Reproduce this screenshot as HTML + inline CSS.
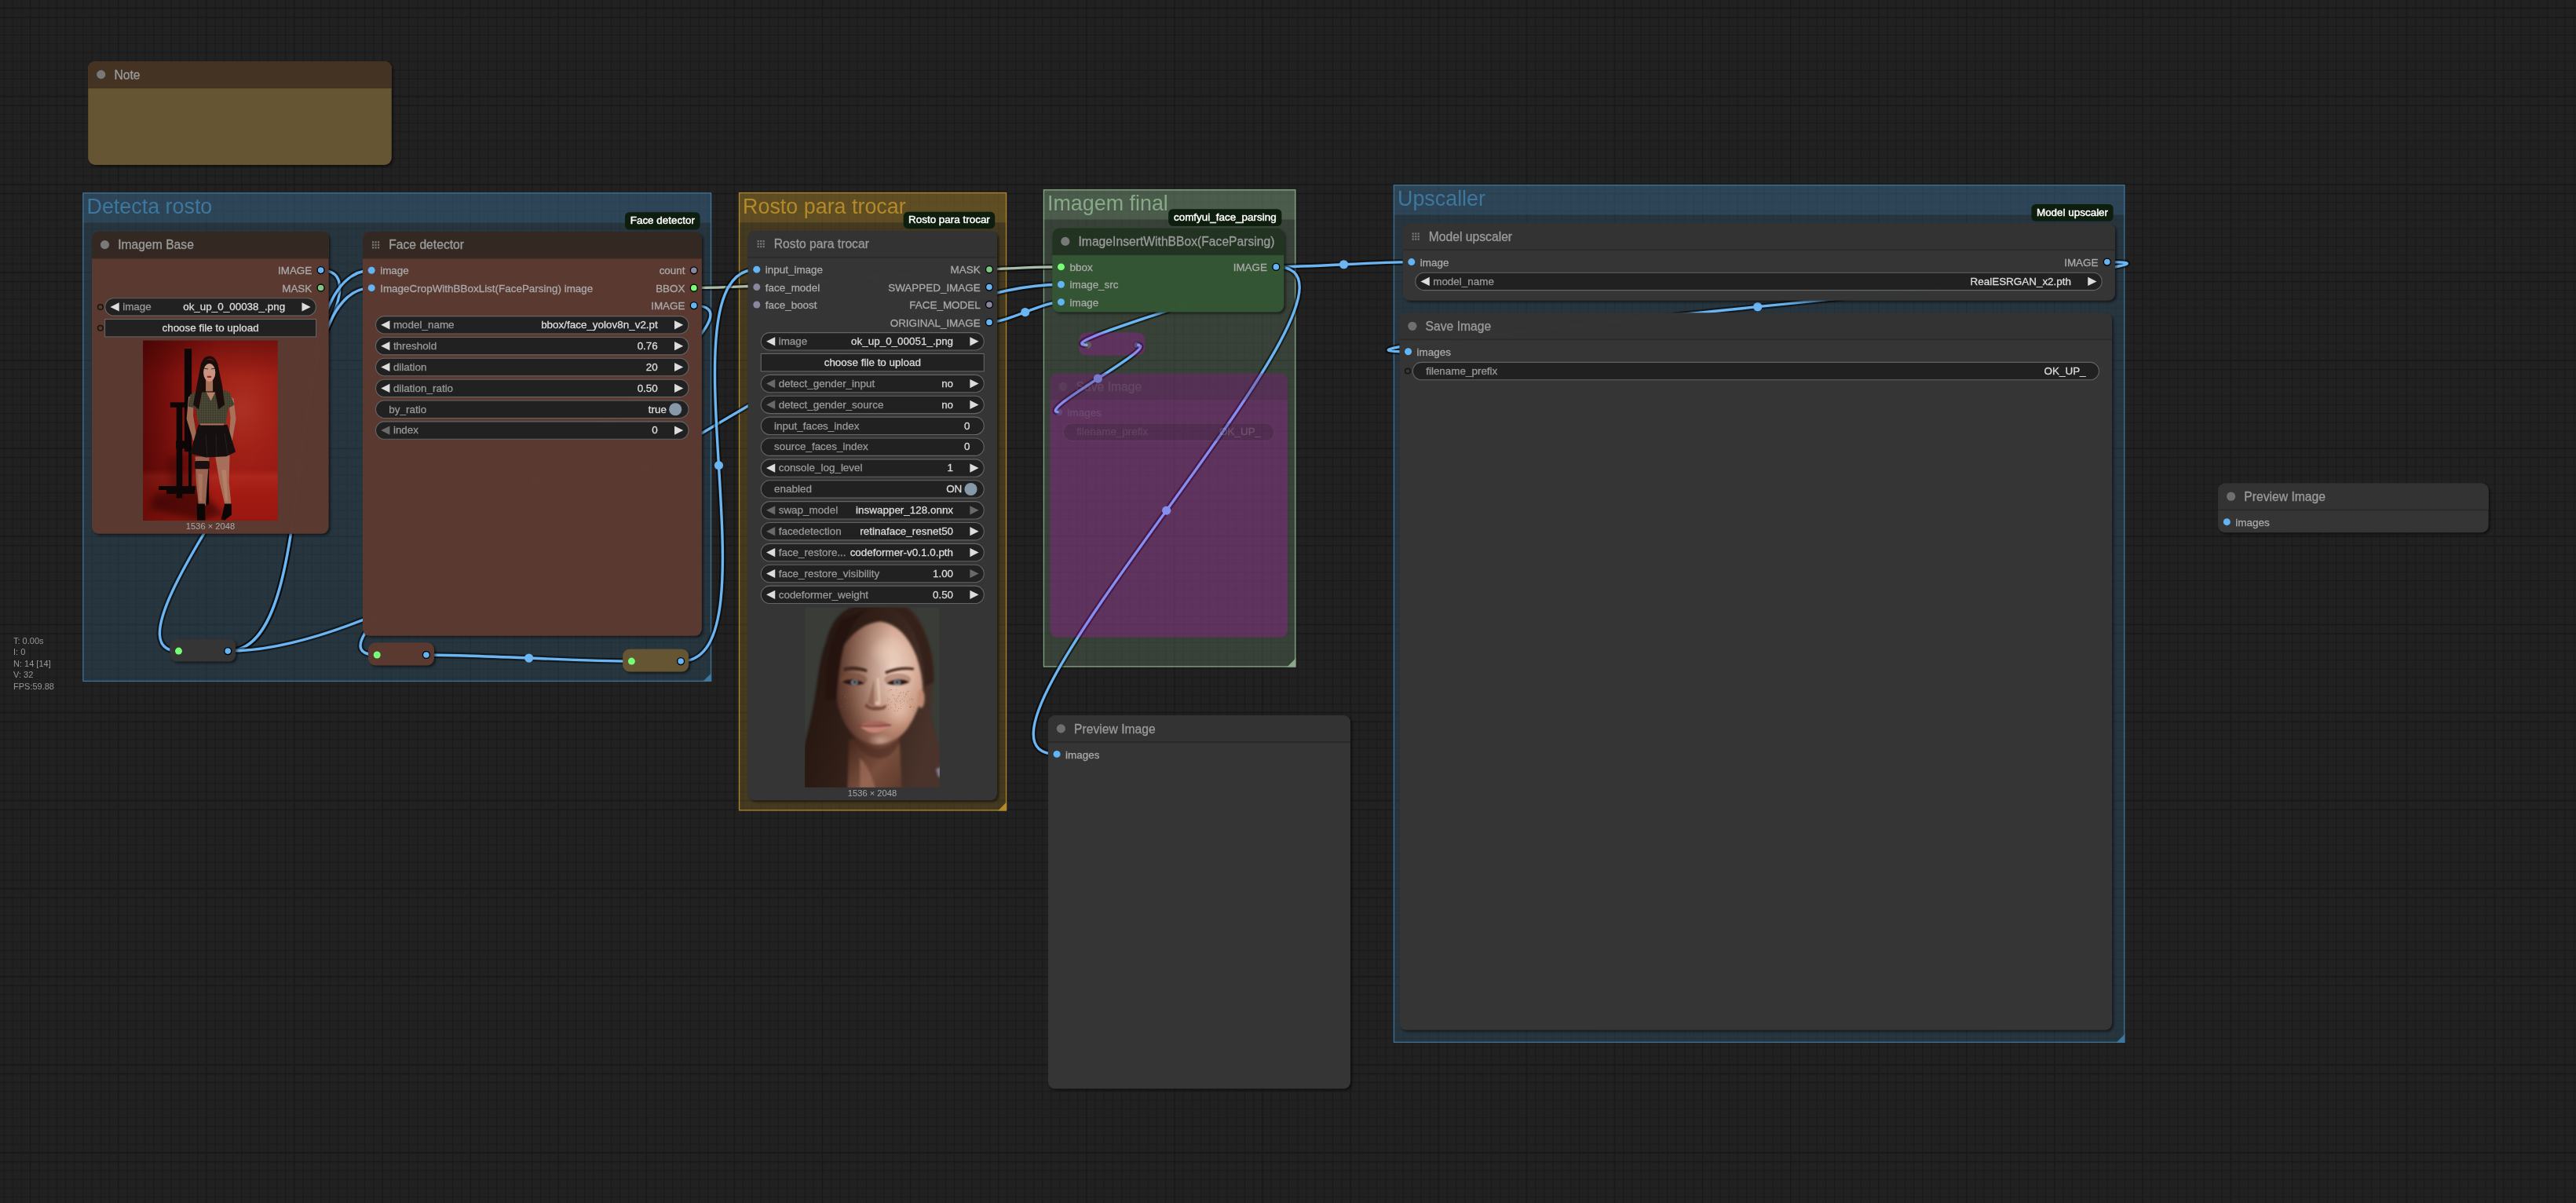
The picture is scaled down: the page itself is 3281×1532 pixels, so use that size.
<!DOCTYPE html>
<html><head><meta charset="utf-8"><title>ComfyUI</title>
<style>
html,body{margin:0;padding:0;background:#212121;}
body{width:3281px;height:1532px;overflow:hidden;}
svg{display:block;font-family:"Liberation Sans", Arial, sans-serif;}
text{white-space:pre;}
</style></head><body>
<svg width="3281" height="1532" viewBox="0 0 3281 1532">
<defs>
<pattern id="gmin" x="38" y="21.6" width="11.21" height="11.21" patternUnits="userSpaceOnUse"><path d="M0.6 0V11.21M0 0.6H11.21" stroke="#1a1a1a" stroke-width="1.25" fill="none"/></pattern>
<pattern id="gmaj" x="38" y="21.6" width="112.1" height="112.1" patternUnits="userSpaceOnUse"><path d="M0.6 0V112.1M0 0.6H112.1M0 100.95H112.1" stroke="#181818" stroke-width="1.3" fill="none"/></pattern>
<filter id="noop" color-interpolation-filters="sRGB" x="-5%" y="-15%" width="110%" height="130%" filterUnits="objectBoundingBox"><feOffset dx="0" dy="0"/></filter>
<filter id="sh" color-interpolation-filters="sRGB" x="-5%" y="-5%" width="110%" height="115%"><feDropShadow dx="2.2" dy="2.2" stdDeviation="1.7" flood-color="#000" flood-opacity="0.5"/></filter>
<filter id="shs" color-interpolation-filters="sRGB" x="-15%" y="-40%" width="130%" height="180%"><feDropShadow dx="2.2" dy="2.2" stdDeviation="1.7" flood-color="#000" flood-opacity="0.5"/></filter>
<filter id="shbs" color-interpolation-filters="sRGB" x="-15%" y="-40%" width="130%" height="180%"><feDropShadow dx="2.2" dy="2.2" stdDeviation="1.7" flood-color="#000" flood-opacity="0.1"/></filter>
<filter id="shb" color-interpolation-filters="sRGB" x="-5%" y="-5%" width="110%" height="115%"><feDropShadow dx="2.2" dy="2.2" stdDeviation="1.7" flood-color="#000" flood-opacity="0.1"/></filter>
<radialGradient id="rbg" cx="0.74" cy="0.38" r="0.9" gradientUnits="objectBoundingBox"><stop offset="0" stop-color="#ad3226"/><stop offset="0.25" stop-color="#a22218"/><stop offset="0.6" stop-color="#941712"/><stop offset="1" stop-color="#6e0c0b"/></radialGradient>
<linearGradient id="rfl" x1="0" y1="0" x2="0" y2="1"><stop offset="0" stop-color="#b0281d" stop-opacity="0"/><stop offset="0.14" stop-color="#b32a1f" stop-opacity="0.8"/><stop offset="0.45" stop-color="#a51c14" stop-opacity="0.9"/><stop offset="1" stop-color="#9c1810" stop-opacity="0.95"/></linearGradient>
<linearGradient id="rlf" x1="0" y1="0" x2="1" y2="0"><stop offset="0" stop-color="#3a0404" stop-opacity="0.5"/><stop offset="0.3" stop-color="#3a0404" stop-opacity="0.18"/><stop offset="0.55" stop-color="#3a0404" stop-opacity="0"/></linearGradient>
<linearGradient id="rtp" x1="0" y1="0" x2="0" y2="1"><stop offset="0" stop-color="#300303" stop-opacity="0.35"/><stop offset="0.2" stop-color="#300303" stop-opacity="0"/></linearGradient>
<filter id="b1" color-interpolation-filters="sRGB" x="-20%" y="-20%" width="140%" height="140%"><feGaussianBlur stdDeviation="0.6"/></filter>
<filter id="b3" color-interpolation-filters="sRGB" x="-30%" y="-30%" width="160%" height="160%"><feGaussianBlur stdDeviation="4"/></filter>
<pattern id="spk" width="3" height="3" patternUnits="userSpaceOnUse"><rect width="3" height="3" fill="#434130"/><rect x="0.3" y="0.4" width="1.1" height="1" fill="#6b6750"/><rect x="1.8" y="1.9" width="0.9" height="0.9" fill="#2f2d22"/></pattern>
<radialGradient id="fsk" cx="0.64" cy="0.36" r="0.72"><stop offset="0" stop-color="#edd2c3"/><stop offset="0.32" stop-color="#deb8a5"/><stop offset="0.66" stop-color="#bf8d76"/><stop offset="1" stop-color="#7c4e3e"/></radialGradient>
<linearGradient id="fsh" x1="0" y1="0" x2="1" y2="0"><stop offset="0" stop-color="#2c1610" stop-opacity="0.62"/><stop offset="0.4" stop-color="#3a2018" stop-opacity="0.22"/><stop offset="0.65" stop-color="#3a2018" stop-opacity="0"/></linearGradient>
<linearGradient id="fhr" x1="0" y1="0" x2="1" y2="0.3"><stop offset="0" stop-color="#21130e"/><stop offset="0.45" stop-color="#301e17"/><stop offset="1" stop-color="#4a342b"/></linearGradient>
<linearGradient id="fnk" x1="0" y1="0" x2="1" y2="1"><stop offset="0" stop-color="#3e2319"/><stop offset="0.55" stop-color="#7a4f3d"/><stop offset="1" stop-color="#5a382b"/></linearGradient>
<radialGradient id="fck" cx="0.5" cy="0.5" r="0.5"><stop offset="0" stop-color="#f0d0be" stop-opacity="0.55"/><stop offset="1" stop-color="#f0d0be" stop-opacity="0"/></radialGradient>
<filter id="b2" color-interpolation-filters="sRGB" x="-20%" y="-20%" width="140%" height="140%"><feGaussianBlur stdDeviation="1.8"/></filter>
<filter id="b15" color-interpolation-filters="sRGB" x="-20%" y="-20%" width="140%" height="140%"><feGaussianBlur stdDeviation="1"/></filter>
<clipPath id="fcl"><rect width="171.6" height="229.3"/></clipPath></defs>
<rect width="3281" height="1532" fill="#212121"/>
<rect width="3281" height="1532" fill="url(#gmin)"/>
<rect width="3281" height="1532" fill="url(#gmaj)"/>
<g id="groups" opacity="0.999">
<rect x="105.3" y="245.3" width="800.9" height="622.8" fill="#3f789e" fill-opacity="0.25"/>
<rect x="105.3" y="245.3" width="800.9" height="38.33" fill="#3f789e" fill-opacity="0.25"/>
<rect x="105.95" y="245.95" width="799.6" height="621.5" fill="none" stroke="#3f789e" stroke-width="1.3" stroke-opacity="0.95"/>
<path d="M906.2 868.1L895 868.1L906.2 856.9Z" fill="#3f789e"/>
<g filter="url(#noop)">
<text x="110.48" y="272.38" font-size="26.88" fill="#3f789e">Detecta rosto</text>
</g>
<rect x="940.9" y="245" width="341.3" height="787.4" fill="#b58b2a" fill-opacity="0.25"/>
<rect x="940.9" y="245" width="341.3" height="38.33" fill="#b58b2a" fill-opacity="0.25"/>
<rect x="941.55" y="245.65" width="340" height="786.1" fill="none" stroke="#b58b2a" stroke-width="1.3" stroke-opacity="0.95"/>
<path d="M1282.2 1032.4L1271 1032.4L1282.2 1021.2Z" fill="#b58b2a"/>
<g filter="url(#noop)">
<text x="946.08" y="272.08" font-size="26.88" fill="#b58b2a">Rosto para trocar</text>
</g>
<rect x="1328.8" y="241.2" width="321.6" height="608.3" fill="#88AA88" fill-opacity="0.25"/>
<rect x="1328.8" y="241.2" width="321.6" height="38.33" fill="#88AA88" fill-opacity="0.25"/>
<rect x="1329.45" y="241.85" width="320.3" height="607" fill="none" stroke="#88AA88" stroke-width="1.3" stroke-opacity="0.95"/>
<path d="M1650.4 849.5L1639.2 849.5L1650.4 838.3Z" fill="#88AA88"/>
<g filter="url(#noop)">
<text x="1333.98" y="268.28" font-size="26.88" fill="#88AA88">Imagem final</text>
</g>
<rect x="1774.8" y="235.2" width="931.6" height="1092.7" fill="#3f789e" fill-opacity="0.25"/>
<rect x="1774.8" y="235.2" width="931.6" height="38.33" fill="#3f789e" fill-opacity="0.25"/>
<rect x="1775.45" y="235.85" width="930.3" height="1091.4" fill="none" stroke="#3f789e" stroke-width="1.3" stroke-opacity="0.95"/>
<path d="M2706.4 1327.9L2695.2 1327.9L2706.4 1316.7Z" fill="#3f789e"/>
<g filter="url(#noop)">
<text x="1779.98" y="262.28" font-size="26.88" fill="#3f789e">Upscaller</text>
</g>
</g>
<g id="links" stroke-linecap="butt">
<path d="M408.62 344.08C538.05 344.08 98.07 829.08 227.5 829.08" fill="none" stroke="#000" stroke-opacity="0.5" stroke-width="7.84"/>
<path d="M408.62 344.08C538.05 344.08 98.07 829.08 227.5 829.08" fill="none" stroke="#6BB5F2" stroke-width="3.36"/>
<circle cx="318.06" cy="586.58" r="5.6" fill="#6BB5F2"/>
<path d="M290.22 829.08C419.77 829.08 343.65 344.28 473.2 344.28" fill="none" stroke="#000" stroke-opacity="0.5" stroke-width="7.84"/>
<path d="M290.22 829.08C419.77 829.08 343.65 344.28 473.2 344.28" fill="none" stroke="#6BB5F2" stroke-width="3.36"/>
<circle cx="381.71" cy="586.68" r="5.6" fill="#6BB5F2"/>
<path d="M290.22 829.08C414.54 829.08 348.88 366.68 473.2 366.68" fill="none" stroke="#000" stroke-opacity="0.5" stroke-width="7.84"/>
<path d="M290.22 829.08C414.54 829.08 348.88 366.68 473.2 366.68" fill="none" stroke="#6BB5F2" stroke-width="3.36"/>
<circle cx="381.71" cy="597.88" r="5.6" fill="#6BB5F2"/>
<path d="M290.22 829.08C580.07 829.08 1061.65 362.28 1351.5 362.28" fill="none" stroke="#000" stroke-opacity="0.5" stroke-width="7.84"/>
<path d="M290.22 829.08C580.07 829.08 1061.65 362.28 1351.5 362.28" fill="none" stroke="#6BB5F2" stroke-width="3.36"/>
<circle cx="820.86" cy="595.68" r="5.6" fill="#6BB5F2"/>
<path d="M883.82 366.68C1000.93 366.68 1234.39 339.88 1351.5 339.88" fill="none" stroke="#000" stroke-opacity="0.5" stroke-width="7.84"/>
<path d="M883.82 366.68C1000.93 366.68 1234.39 339.88 1351.5 339.88" fill="none" stroke="#A9BDA9" stroke-width="3.36"/>
<circle cx="1117.66" cy="353.28" r="5.6" fill="#A9BDA9"/>
<path d="M883.82 389.08C1034 389.08 330.02 833.98 480.2 833.98" fill="none" stroke="#000" stroke-opacity="0.5" stroke-width="7.84"/>
<path d="M883.82 389.08C1034 389.08 330.02 833.98 480.2 833.98" fill="none" stroke="#6BB5F2" stroke-width="3.36"/>
<circle cx="682.01" cy="611.53" r="5.6" fill="#6BB5F2"/>
<path d="M542.92 833.98C608.32 833.98 739 842.08 804.4 842.08" fill="none" stroke="#000" stroke-opacity="0.5" stroke-width="7.84"/>
<path d="M542.92 833.98C608.32 833.98 739 842.08 804.4 842.08" fill="none" stroke="#6BB5F2" stroke-width="3.36"/>
<circle cx="673.66" cy="838.03" r="5.6" fill="#6BB5F2"/>
<path d="M867.12 842.08C994.17 842.08 836.75 343.18 963.8 343.18" fill="none" stroke="#000" stroke-opacity="0.5" stroke-width="7.84"/>
<path d="M867.12 842.08C994.17 842.08 836.75 343.18 963.8 343.18" fill="none" stroke="#6BB5F2" stroke-width="3.36"/>
<circle cx="915.46" cy="592.63" r="5.6" fill="#6BB5F2"/>
<path d="M1260.02 410.38C1283.78 410.38 1327.74 384.68 1351.5 384.68" fill="none" stroke="#000" stroke-opacity="0.5" stroke-width="7.84"/>
<path d="M1260.02 410.38C1283.78 410.38 1327.74 384.68 1351.5 384.68" fill="none" stroke="#6BB5F2" stroke-width="3.36"/>
<circle cx="1305.76" cy="397.53" r="5.6" fill="#6BB5F2"/>
<path d="M1625.32 339.88C1668.47 339.88 1754.65 333.58 1797.8 333.58" fill="none" stroke="#000" stroke-opacity="0.5" stroke-width="7.84"/>
<path d="M1625.32 339.88C1668.47 339.88 1754.65 333.58 1797.8 333.58" fill="none" stroke="#6BB5F2" stroke-width="3.36"/>
<circle cx="1711.56" cy="336.73" r="5.6" fill="#6BB5F2"/>
<path d="M1625.32 339.88C1795.43 339.88 1175.99 960.38 1346.1 960.38" fill="none" stroke="#000" stroke-opacity="0.5" stroke-width="7.84"/>
<path d="M1625.32 339.88C1795.43 339.88 1175.99 960.38 1346.1 960.38" fill="none" stroke="#6BB5F2" stroke-width="3.36"/>
<circle cx="1485.71" cy="650.13" r="5.6" fill="#6BB5F2"/>
<path d="M1625.32 339.88C1690.22 339.88 1320.6 439.28 1385.5 439.28" fill="none" stroke="#000" stroke-opacity="0.5" stroke-width="7.84"/>
<path d="M1625.32 339.88C1690.22 339.88 1320.6 439.28 1385.5 439.28" fill="none" stroke="#6BB5F2" stroke-width="3.36"/>
<circle cx="1505.41" cy="389.58" r="5.6" fill="#6BB5F2"/>
<path d="M1448.22 439.28C1481.06 439.28 1315.76 524.88 1348.6 524.88" fill="none" stroke="#000" stroke-opacity="0.5" stroke-width="7.84"/>
<path d="M1448.22 439.28C1481.06 439.28 1315.76 524.88 1348.6 524.88" fill="none" stroke="#6BB5F2" stroke-width="3.36"/>
<circle cx="1398.41" cy="482.08" r="5.6" fill="#6BB5F2"/>
<path d="M2683.82 333.58C2908.2 333.58 1569.22 447.78 1793.6 447.78" fill="none" stroke="#000" stroke-opacity="0.5" stroke-width="7.84"/>
<path d="M2683.82 333.58C2908.2 333.58 1569.22 447.78 1793.6 447.78" fill="none" stroke="#6BB5F2" stroke-width="3.36"/>
<circle cx="2238.71" cy="390.68" r="5.6" fill="#6BB5F2"/>
</g>
<g id="nodes" opacity="0.999">
<path d="M121.16 78.1H489.84A8.96 8.96 0 0 1 498.8 87.06V200.94A8.96 8.96 0 0 1 489.84 209.9H121.16A8.96 8.96 0 0 1 112.2 200.94V87.06A8.96 8.96 0 0 1 121.16 78.1Z" fill="#675634" filter="url(#shs)"/>
<path d="M121.16 78.1H489.84A8.96 8.96 0 0 1 498.8 87.06V111.7H112.2V87.06A8.96 8.96 0 0 1 121.16 78.1Z" fill="#453423"/>
<rect x="112.2" y="111.1" width="386.6" height="1.9" fill="#000" fill-opacity="0.18"/>
<circle cx="128.7" cy="94.9" r="5.6" fill="#7a7a7a"/>
<text x="145.4" y="100.5" font-size="15.68" fill="#9c9c9c" stroke="#9c9c9c" stroke-width="0.3">Note</text>
<path d="M125.96 294.8H409.74A8.96 8.96 0 0 1 418.7 303.76V670.84A8.96 8.96 0 0 1 409.74 679.8H125.96A8.96 8.96 0 0 1 117 670.84V303.76A8.96 8.96 0 0 1 125.96 294.8Z" fill="#5b3a31" filter="url(#sh)"/>
<path d="M125.96 294.8H409.74A8.96 8.96 0 0 1 418.7 303.76V328.4H117V303.76A8.96 8.96 0 0 1 125.96 294.8Z" fill="#342a23"/>
<rect x="117" y="327.8" width="301.7" height="1.9" fill="#000" fill-opacity="0.18"/>
<circle cx="133.5" cy="311.6" r="5.6" fill="#7a7a7a"/>
<text x="150.2" y="317.2" font-size="15.68" fill="#9c9c9c" stroke="#9c9c9c" stroke-width="0.3">Imagem Base</text>
<circle cx="408.62" cy="344.08" r="4.48" fill="#64B5F6" stroke="#000" stroke-width="1.3"/>
<text x="397.3" y="349.28" font-size="13.44" fill="#AAAAAA" text-anchor="end" stroke="#aaa" stroke-width="0.3">IMAGE</text>
<circle cx="408.62" cy="366.48" r="4.48" fill="#81C784" stroke="#000" stroke-width="1.3"/>
<text x="397.3" y="371.68" font-size="13.44" fill="#AAAAAA" text-anchor="end" stroke="#aaa" stroke-width="0.3">MASK</text>
<rect x="133.8" y="379.7" width="268.6" height="22.4" rx="11.2" fill="#222" stroke="#666" stroke-width="1.1"/>
<path d="M151.72 385.3L140.52 390.9L151.72 396.5Z" fill="#DDDDDD"/>
<path d="M384.48 385.3L395.68 390.9L384.48 396.5Z" fill="#DDDDDD"/>
<text x="156.2" y="395.18" font-size="13.44" fill="#999999" stroke="#999" stroke-width="0.3">image</text>
<text x="363.2" y="395.18" font-size="13.44" fill="#DDDDDD" text-anchor="end" stroke="#ddd" stroke-width="0.3">ok_up_0_00038_.png</text>
<rect x="133.6" y="406.5" width="269" height="22.4" fill="#222" stroke="#666" stroke-width="1.1"/>
<text x="268.1" y="421.98" font-size="13.44" fill="#DDDDDD" text-anchor="middle" stroke="#ddd" stroke-width="0.3">choose file to upload</text>
<circle cx="127.9" cy="391" r="3.3" fill="none" stroke="#15150c" stroke-width="1.5"/>
<circle cx="127.9" cy="417.7" r="3.3" fill="none" stroke="#15150c" stroke-width="1.5"/>
<svg x="182.1" y="433.4" width="171.7" height="229.6" viewBox="0 0 171.7 229.6" preserveAspectRatio="none"><rect width="171.7" height="229.6" fill="url(#rbg)"/><rect y="164" width="171.7" height="65.6" fill="url(#rfl)"/><rect width="171.7" height="229.6" fill="url(#rlf)"/><rect width="171.7" height="229.6" fill="url(#rtp)"/><path d="M14 196L70 188L104 222L70 229.6L8 214Z" fill="#2a0404" fill-opacity="0.6" filter="url(#b3)"/><path d="M30 150L64 140L66 185L34 190Z" fill="#2a0404" fill-opacity="0.35" filter="url(#b3)"/><g fill="#0e0707" filter="url(#b1)"><rect x="52.8" y="10.8" width="9.2" height="131"/><rect x="42.6" y="84" width="7.6" height="117"/><rect x="34.7" y="79" width="22" height="6.4"/><rect x="42" y="128" width="18" height="10"/><rect x="58" y="140" width="4" height="50"/><rect x="20" y="185.6" width="47" height="5"/><rect x="30" y="190" width="36" height="5.5"/><rect x="78.8" y="164" width="5.2" height="45"/></g><g filter="url(#b1)"><path d="M66.5 148L84.5 148L81.5 185L80 210L70.8 210L67.8 180Z" fill="#9a6552"/><path d="M92 147L110.5 146L109.5 180L112.5 210L104.5 210L97.5 180Z" fill="#a8705a"/><path d="M70 170L76 170L75 205L72 205Z" fill="#b88068" fill-opacity="0.6"/><path d="M100 165L106 165L108 205L105 205Z" fill="#c08a70" fill-opacity="0.6"/><rect x="66" y="153.5" width="18.8" height="10.3" rx="2" fill="#1c1110"/><path d="M68.5 208L78.8 208L79.5 229L69 229Z" fill="#0c0808"/><path d="M104 208L112.8 208L113 222L104 229L99.5 228L101.5 220Z" fill="#0c0808"/><path d="M58 72L65 68L64 96L69 126L64 128L55.5 100Z" fill="#a06c56"/><path d="M108 70L115.5 74L118.5 100L113.5 129L109.5 127L111.5 98Z" fill="#a8735b"/><path d="M70.5 107.5L107.5 107.5L118 142L106 147.8L80 149.2L60 144Z" fill="#161110"/><path d="M80 120L82 149M93 120L94 148M104 118L108 146" stroke="#2c2624" stroke-width="0.8" fill="none"/><rect x="73" y="104.5" width="30" height="3.6" fill="#a8745c"/><path d="M60 69L74 62L95 61L110 66L116.5 82L108.5 86.5L105.5 106L70.5 106L67 86.5L57.5 84Z" fill="url(#spk)"/><path d="M79 63L86.5 77L94 62Z" fill="#b8826a"/><path d="M74 29Q84 20 95 29L101 58L104 82L96 88L92 66L75 66L71 88L64 82L69 55Z" fill="#1a0f0d"/><rect x="80" y="50" width="9" height="15" fill="#a9745e"/><ellipse cx="84.6" cy="41" rx="7.6" ry="11.5" fill="#c99683"/><path d="M76 40Q76 24 85 23.5Q94 24 93.5 40L96 38Q95 20 84.5 20Q74 20 73.5 38Z" fill="#1a0f0d"/><path d="M78 36L83 36.5M87 36.5L92 36" stroke="#4a2a22" stroke-width="1" fill="none"/><rect x="81.6" y="45.4" width="5.6" height="2.1" rx="1" fill="#a8201c"/></g></svg>
<text x="268" y="673.5" font-size="11.2" fill="#AAAAAA" text-anchor="middle">1536 × 2048</text>
<path d="M470.96 295H884.94A8.96 8.96 0 0 1 893.9 303.96V800.84A8.96 8.96 0 0 1 884.94 809.8H470.96A8.96 8.96 0 0 1 462 800.84V303.96A8.96 8.96 0 0 1 470.96 295Z" fill="#5b3a31" filter="url(#sh)"/>
<path d="M470.96 295H884.94A8.96 8.96 0 0 1 893.9 303.96V328.6H462V303.96A8.96 8.96 0 0 1 470.96 295Z" fill="#342a23"/>
<rect x="462" y="328" width="431.9" height="1.9" fill="#000" fill-opacity="0.18"/>
<path d="M474 307.2h2.2v2.2h-2.2zM474 310.7h2.2v2.2h-2.2zM474 314.2h2.2v2.2h-2.2zM477.5 307.2h2.2v2.2h-2.2zM477.5 310.7h2.2v2.2h-2.2zM477.5 314.2h2.2v2.2h-2.2zM481 307.2h2.2v2.2h-2.2zM481 310.7h2.2v2.2h-2.2zM481 314.2h2.2v2.2h-2.2z" fill="#787878"/>
<text x="495.2" y="317.4" font-size="15.68" fill="#9c9c9c" stroke="#9c9c9c" stroke-width="0.3">Face detector</text>
<circle cx="473.2" cy="344.28" r="4.48" fill="#64B5F6"/>
<text x="484.2" y="349.48" font-size="13.44" fill="#AAAAAA" stroke="#aaa" stroke-width="0.3">image</text>
<circle cx="473.2" cy="366.68" r="4.48" fill="#64B5F6"/>
<text x="484.2" y="371.88" font-size="13.44" fill="#AAAAAA" stroke="#aaa" stroke-width="0.3">ImageCropWithBBoxList(FaceParsing) image</text>
<circle cx="883.82" cy="344.28" r="4.48" fill="#8a879f" stroke="#000" stroke-width="1.3"/>
<text x="872.5" y="349.48" font-size="13.44" fill="#AAAAAA" text-anchor="end" stroke="#aaa" stroke-width="0.3">count</text>
<circle cx="883.82" cy="366.68" r="4.48" fill="#77FF77" stroke="#000" stroke-width="1.3"/>
<text x="872.5" y="371.88" font-size="13.44" fill="#AAAAAA" text-anchor="end" stroke="#aaa" stroke-width="0.3">BBOX</text>
<circle cx="883.82" cy="389.08" r="4.48" fill="#64B5F6" stroke="#000" stroke-width="1.3"/>
<text x="872.5" y="394.28" font-size="13.44" fill="#AAAAAA" text-anchor="end" stroke="#aaa" stroke-width="0.3">IMAGE</text>
<rect x="478.5" y="402.6" width="398.5" height="22.4" rx="11.2" fill="#222" stroke="#666" stroke-width="1.1"/>
<path d="M496.42 408.2L485.22 413.8L496.42 419.4Z" fill="#DDDDDD"/>
<path d="M859.08 408.2L870.28 413.8L859.08 419.4Z" fill="#DDDDDD"/>
<text x="500.9" y="418.08" font-size="13.44" fill="#999999" stroke="#999" stroke-width="0.3">model_name</text>
<text x="837.8" y="418.08" font-size="13.44" fill="#DDDDDD" text-anchor="end" stroke="#ddd" stroke-width="0.3">bbox/face_yolov8n_v2.pt</text>
<rect x="478.5" y="429.46" width="398.5" height="22.4" rx="11.2" fill="#222" stroke="#666" stroke-width="1.1"/>
<path d="M496.42 435.06L485.22 440.66L496.42 446.26Z" fill="#DDDDDD"/>
<path d="M859.08 435.06L870.28 440.66L859.08 446.26Z" fill="#DDDDDD"/>
<text x="500.9" y="444.94" font-size="13.44" fill="#999999" stroke="#999" stroke-width="0.3">threshold</text>
<text x="837.8" y="444.94" font-size="13.44" fill="#DDDDDD" text-anchor="end" stroke="#ddd" stroke-width="0.3">0.76</text>
<rect x="478.5" y="456.32" width="398.5" height="22.4" rx="11.2" fill="#222" stroke="#666" stroke-width="1.1"/>
<path d="M496.42 461.92L485.22 467.52L496.42 473.12Z" fill="#DDDDDD"/>
<path d="M859.08 461.92L870.28 467.52L859.08 473.12Z" fill="#DDDDDD"/>
<text x="500.9" y="471.8" font-size="13.44" fill="#999999" stroke="#999" stroke-width="0.3">dilation</text>
<text x="837.8" y="471.8" font-size="13.44" fill="#DDDDDD" text-anchor="end" stroke="#ddd" stroke-width="0.3">20</text>
<rect x="478.5" y="483.18" width="398.5" height="22.4" rx="11.2" fill="#222" stroke="#666" stroke-width="1.1"/>
<path d="M496.42 488.78L485.22 494.38L496.42 499.98Z" fill="#DDDDDD"/>
<path d="M859.08 488.78L870.28 494.38L859.08 499.98Z" fill="#DDDDDD"/>
<text x="500.9" y="498.66" font-size="13.44" fill="#999999" stroke="#999" stroke-width="0.3">dilation_ratio</text>
<text x="837.8" y="498.66" font-size="13.44" fill="#DDDDDD" text-anchor="end" stroke="#ddd" stroke-width="0.3">0.50</text>
<rect x="478.5" y="510.04" width="398.5" height="22.4" rx="11.2" fill="#222" stroke="#666" stroke-width="1.1"/>
<text x="495.3" y="525.52" font-size="13.44" fill="#999999" stroke="#999" stroke-width="0.3">by_ratio</text>
<circle cx="860.2" cy="521.24" r="8.06" fill="#8899AA"/>
<text x="849" y="525.52" font-size="13.44" fill="#DDDDDD" text-anchor="end" stroke="#ddd" stroke-width="0.3">true</text>
<rect x="478.5" y="536.9" width="398.5" height="22.4" rx="11.2" fill="#222" stroke="#666" stroke-width="1.1"/>
<path d="M496.42 542.5L485.22 548.1L496.42 553.7Z" fill="#6a6a6a"/>
<path d="M859.08 542.5L870.28 548.1L859.08 553.7Z" fill="#DDDDDD"/>
<text x="500.9" y="552.38" font-size="13.44" fill="#999999" stroke="#999" stroke-width="0.3">index</text>
<text x="837.8" y="552.38" font-size="13.44" fill="#DDDDDD" text-anchor="end" stroke="#ddd" stroke-width="0.3">0</text>
<rect x="796" y="270.2" width="95.6" height="22.4" rx="5.6" fill="#0F1F0F"/>
<text x="843.8" y="285.48" font-size="13.44" fill="#FFFFFF" text-anchor="middle" stroke="#fff" stroke-width="0.45">Face detector</text>
<path d="M225.26 813.4H291.34A8.96 8.96 0 0 1 300.3 822.36V833.56A8.96 8.96 0 0 1 291.34 842.52H225.26A8.96 8.96 0 0 1 216.3 833.56V822.36A8.96 8.96 0 0 1 225.26 813.4Z" fill="#363636" filter="url(#shs)"/>
<circle cx="227.5" cy="829.08" r="4.48" fill="#77FF77"/>
<circle cx="290.22" cy="829.08" r="4.48" fill="#64B5F6" stroke="#000" stroke-width="1.3"/>
<path d="M477.96 818.3H544.04A8.96 8.96 0 0 1 553 827.26V838.46A8.96 8.96 0 0 1 544.04 847.42H477.96A8.96 8.96 0 0 1 469 838.46V827.26A8.96 8.96 0 0 1 477.96 818.3Z" fill="#5b3a31" filter="url(#shs)"/>
<circle cx="480.2" cy="833.98" r="4.48" fill="#77FF77"/>
<circle cx="542.92" cy="833.98" r="4.48" fill="#64B5F6" stroke="#000" stroke-width="1.3"/>
<path d="M802.16 826.4H868.24A8.96 8.96 0 0 1 877.2 835.36V846.56A8.96 8.96 0 0 1 868.24 855.52H802.16A8.96 8.96 0 0 1 793.2 846.56V835.36A8.96 8.96 0 0 1 802.16 826.4Z" fill="#675634" filter="url(#shs)"/>
<circle cx="804.4" cy="842.08" r="4.48" fill="#77FF77"/>
<circle cx="867.12" cy="842.08" r="4.48" fill="#64B5F6" stroke="#000" stroke-width="1.3"/>
<path d="M961.56 293.9H1261.14A8.96 8.96 0 0 1 1270.1 302.86V1010.34A8.96 8.96 0 0 1 1261.14 1019.3H961.56A8.96 8.96 0 0 1 952.6 1010.34V302.86A8.96 8.96 0 0 1 961.56 293.9Z" fill="#363636" filter="url(#sh)"/>
<path d="M961.56 293.9H1261.14A8.96 8.96 0 0 1 1270.1 302.86V327.5H952.6V302.86A8.96 8.96 0 0 1 961.56 293.9Z" fill="#343434"/>
<rect x="952.6" y="326.9" width="317.5" height="1.9" fill="#000" fill-opacity="0.18"/>
<path d="M964.6 306.1h2.2v2.2h-2.2zM964.6 309.6h2.2v2.2h-2.2zM964.6 313.1h2.2v2.2h-2.2zM968.1 306.1h2.2v2.2h-2.2zM968.1 309.6h2.2v2.2h-2.2zM968.1 313.1h2.2v2.2h-2.2zM971.6 306.1h2.2v2.2h-2.2zM971.6 309.6h2.2v2.2h-2.2zM971.6 313.1h2.2v2.2h-2.2z" fill="#787878"/>
<text x="985.8" y="316.3" font-size="15.68" fill="#9c9c9c" stroke="#9c9c9c" stroke-width="0.3">Rosto para trocar</text>
<circle cx="963.8" cy="343.18" r="4.48" fill="#64B5F6"/>
<text x="974.8" y="348.38" font-size="13.44" fill="#AAAAAA" stroke="#aaa" stroke-width="0.3">input_image</text>
<circle cx="963.8" cy="365.58" r="4.48" fill="#8a879f"/>
<text x="974.8" y="370.78" font-size="13.44" fill="#AAAAAA" stroke="#aaa" stroke-width="0.3">face_model</text>
<circle cx="963.8" cy="387.98" r="4.48" fill="#8a879f"/>
<text x="974.8" y="393.18" font-size="13.44" fill="#AAAAAA" stroke="#aaa" stroke-width="0.3">face_boost</text>
<circle cx="1260.02" cy="343.18" r="4.48" fill="#81C784" stroke="#000" stroke-width="1.3"/>
<text x="1248.7" y="348.38" font-size="13.44" fill="#AAAAAA" text-anchor="end" stroke="#aaa" stroke-width="0.3">MASK</text>
<circle cx="1260.02" cy="365.58" r="4.48" fill="#64B5F6" stroke="#000" stroke-width="1.3"/>
<text x="1248.7" y="370.78" font-size="13.44" fill="#AAAAAA" text-anchor="end" stroke="#aaa" stroke-width="0.3">SWAPPED_IMAGE</text>
<circle cx="1260.02" cy="387.98" r="4.48" fill="#8a879f" stroke="#000" stroke-width="1.3"/>
<text x="1248.7" y="393.18" font-size="13.44" fill="#AAAAAA" text-anchor="end" stroke="#aaa" stroke-width="0.3">FACE_MODEL</text>
<circle cx="1260.02" cy="410.38" r="4.48" fill="#64B5F6" stroke="#000" stroke-width="1.3"/>
<text x="1248.7" y="415.58" font-size="13.44" fill="#AAAAAA" text-anchor="end" stroke="#aaa" stroke-width="0.3">ORIGINAL_IMAGE</text>
<rect x="969.3" y="423.6" width="284" height="22.4" rx="11.2" fill="#222" stroke="#666" stroke-width="1.1"/>
<path d="M987.22 429.2L976.02 434.8L987.22 440.4Z" fill="#DDDDDD"/>
<path d="M1235.38 429.2L1246.58 434.8L1235.38 440.4Z" fill="#DDDDDD"/>
<text x="991.7" y="439.08" font-size="13.44" fill="#999999" stroke="#999" stroke-width="0.3">image</text>
<text x="1214.1" y="439.08" font-size="13.44" fill="#DDDDDD" text-anchor="end" stroke="#ddd" stroke-width="0.3">ok_up_0_00051_.png</text>
<rect x="969.3" y="450.48" width="284" height="22.4" fill="#222" stroke="#666" stroke-width="1.1"/>
<text x="1111.3" y="465.96" font-size="13.44" fill="#DDDDDD" text-anchor="middle" stroke="#ddd" stroke-width="0.3">choose file to upload</text>
<rect x="969.3" y="477.36" width="284" height="22.4" rx="11.2" fill="#222" stroke="#666" stroke-width="1.1"/>
<path d="M987.22 482.96L976.02 488.56L987.22 494.16Z" fill="#6a6a6a"/>
<path d="M1235.38 482.96L1246.58 488.56L1235.38 494.16Z" fill="#DDDDDD"/>
<text x="991.7" y="492.84" font-size="13.44" fill="#999999" stroke="#999" stroke-width="0.3">detect_gender_input</text>
<text x="1214.1" y="492.84" font-size="13.44" fill="#DDDDDD" text-anchor="end" stroke="#ddd" stroke-width="0.3">no</text>
<rect x="969.3" y="504.24" width="284" height="22.4" rx="11.2" fill="#222" stroke="#666" stroke-width="1.1"/>
<path d="M987.22 509.84L976.02 515.44L987.22 521.04Z" fill="#6a6a6a"/>
<path d="M1235.38 509.84L1246.58 515.44L1235.38 521.04Z" fill="#DDDDDD"/>
<text x="991.7" y="519.72" font-size="13.44" fill="#999999" stroke="#999" stroke-width="0.3">detect_gender_source</text>
<text x="1214.1" y="519.72" font-size="13.44" fill="#DDDDDD" text-anchor="end" stroke="#ddd" stroke-width="0.3">no</text>
<rect x="969.3" y="531.12" width="284" height="22.4" rx="11.2" fill="#222" stroke="#666" stroke-width="1.1"/>
<text x="986.1" y="546.6" font-size="13.44" fill="#999999" stroke="#999" stroke-width="0.3">input_faces_index</text>
<text x="1235.6" y="546.6" font-size="13.44" fill="#DDDDDD" text-anchor="end" stroke="#ddd" stroke-width="0.3">0</text>
<rect x="969.3" y="558" width="284" height="22.4" rx="11.2" fill="#222" stroke="#666" stroke-width="1.1"/>
<text x="986.1" y="573.48" font-size="13.44" fill="#999999" stroke="#999" stroke-width="0.3">source_faces_index</text>
<text x="1235.6" y="573.48" font-size="13.44" fill="#DDDDDD" text-anchor="end" stroke="#ddd" stroke-width="0.3">0</text>
<rect x="969.3" y="584.88" width="284" height="22.4" rx="11.2" fill="#222" stroke="#666" stroke-width="1.1"/>
<path d="M987.22 590.48L976.02 596.08L987.22 601.68Z" fill="#DDDDDD"/>
<path d="M1235.38 590.48L1246.58 596.08L1235.38 601.68Z" fill="#DDDDDD"/>
<text x="991.7" y="600.36" font-size="13.44" fill="#999999" stroke="#999" stroke-width="0.3">console_log_level</text>
<text x="1214.1" y="600.36" font-size="13.44" fill="#DDDDDD" text-anchor="end" stroke="#ddd" stroke-width="0.3">1</text>
<rect x="969.3" y="611.76" width="284" height="22.4" rx="11.2" fill="#222" stroke="#666" stroke-width="1.1"/>
<text x="986.1" y="627.24" font-size="13.44" fill="#999999" stroke="#999" stroke-width="0.3">enabled</text>
<circle cx="1236.5" cy="622.96" r="8.06" fill="#8899AA"/>
<text x="1225.3" y="627.24" font-size="13.44" fill="#DDDDDD" text-anchor="end" stroke="#ddd" stroke-width="0.3">ON</text>
<rect x="969.3" y="638.64" width="284" height="22.4" rx="11.2" fill="#222" stroke="#666" stroke-width="1.1"/>
<path d="M987.22 644.24L976.02 649.84L987.22 655.44Z" fill="#6a6a6a"/>
<path d="M1235.38 644.24L1246.58 649.84L1235.38 655.44Z" fill="#6a6a6a"/>
<text x="991.7" y="654.12" font-size="13.44" fill="#999999" stroke="#999" stroke-width="0.3">swap_model</text>
<text x="1214.1" y="654.12" font-size="13.44" fill="#DDDDDD" text-anchor="end" stroke="#ddd" stroke-width="0.3">inswapper_128.onnx</text>
<rect x="969.3" y="665.52" width="284" height="22.4" rx="11.2" fill="#222" stroke="#666" stroke-width="1.1"/>
<path d="M987.22 671.12L976.02 676.72L987.22 682.32Z" fill="#6a6a6a"/>
<path d="M1235.38 671.12L1246.58 676.72L1235.38 682.32Z" fill="#DDDDDD"/>
<text x="991.7" y="681" font-size="13.44" fill="#999999" stroke="#999" stroke-width="0.3">facedetection</text>
<text x="1214.1" y="681" font-size="13.44" fill="#DDDDDD" text-anchor="end" stroke="#ddd" stroke-width="0.3">retinaface_resnet50</text>
<rect x="969.3" y="692.4" width="284" height="22.4" rx="11.2" fill="#222" stroke="#666" stroke-width="1.1"/>
<path d="M987.22 698L976.02 703.6L987.22 709.2Z" fill="#DDDDDD"/>
<path d="M1235.38 698L1246.58 703.6L1235.38 709.2Z" fill="#DDDDDD"/>
<text x="991.7" y="707.88" font-size="13.44" fill="#999999" stroke="#999" stroke-width="0.3">face_restore...</text>
<text x="1214.1" y="707.88" font-size="13.44" fill="#DDDDDD" text-anchor="end" stroke="#ddd" stroke-width="0.3">codeformer-v0.1.0.pth</text>
<rect x="969.3" y="719.28" width="284" height="22.4" rx="11.2" fill="#222" stroke="#666" stroke-width="1.1"/>
<path d="M987.22 724.88L976.02 730.48L987.22 736.08Z" fill="#DDDDDD"/>
<path d="M1235.38 724.88L1246.58 730.48L1235.38 736.08Z" fill="#6a6a6a"/>
<text x="991.7" y="734.76" font-size="13.44" fill="#999999" stroke="#999" stroke-width="0.3">face_restore_visibility</text>
<text x="1214.1" y="734.76" font-size="13.44" fill="#DDDDDD" text-anchor="end" stroke="#ddd" stroke-width="0.3">1.00</text>
<rect x="969.3" y="746.16" width="284" height="22.4" rx="11.2" fill="#222" stroke="#666" stroke-width="1.1"/>
<path d="M987.22 751.76L976.02 757.36L987.22 762.96Z" fill="#DDDDDD"/>
<path d="M1235.38 751.76L1246.58 757.36L1235.38 762.96Z" fill="#DDDDDD"/>
<text x="991.7" y="761.64" font-size="13.44" fill="#999999" stroke="#999" stroke-width="0.3">codeformer_weight</text>
<text x="1214.1" y="761.64" font-size="13.44" fill="#DDDDDD" text-anchor="end" stroke="#ddd" stroke-width="0.3">0.50</text>
<svg x="1025.2" y="773.4" width="171.6" height="229.3" viewBox="0 0 171.6 229.3" preserveAspectRatio="none"><g clip-path="url(#fcl)"><rect width="171.6" height="229.3" fill="#3a3d38"/><g filter="url(#b2)"><path d="M27 44Q36 4 70 -4L120 -6Q152 6 160 60Q164 100 160 130Q166 170 180 200L180 240L-8 240L-8 200Q8 150 15 100Q20 60 27 44Z" fill="url(#fhr)"/><path d="M167 206L175 202L175 216L170 216Z" fill="#8a8296"/><path d="M56 168L120 160L124 240L54 240Z" fill="url(#fnk)"/><path d="M70 192Q84 204 92 240L70 240Z" fill="#a87660" fill-opacity="0.6"/><path d="M96 18Q126 22 142 62Q150 86 150 104Q146 132 130 155Q110 180 92 181Q70 176 52 150Q38 125 40 96Q42 70 50 48Q70 20 96 18Z" fill="url(#fsk)"/><path d="M96 18Q126 22 142 62Q150 86 150 104Q146 132 130 155Q110 180 92 181Q70 176 52 150Q38 125 40 96Q42 70 50 48Q70 20 96 18Z" fill="url(#fsh)"/><ellipse cx="106" cy="56" rx="24" ry="20" fill="url(#fck)"/><ellipse cx="122" cy="132" rx="18" ry="20" fill="url(#fck)"/><ellipse cx="96" cy="170" rx="16" ry="9" fill="url(#fck)"/><path d="M56 156Q90 192 128 158Q112 196 92 192Q70 190 56 156Z" fill="#4a2a20" fill-opacity="0.55"/><ellipse cx="148" cy="116" rx="4.5" ry="12" fill="#c08c74"/><path d="M96 -4Q62 6 50 46Q42 80 40 118L26 118Q24 56 46 16Z" fill="#25140f"/><path d="M96 -4Q134 6 146 52Q153 80 152 100L164 96Q166 36 130 2Z" fill="#36221a"/></g><g filter="url(#b15)"><ellipse cx="62" cy="92" rx="17" ry="8" fill="#7a4a38" fill-opacity="0.55"/><ellipse cx="118" cy="92" rx="17" ry="8" fill="#8a5642" fill-opacity="0.45"/><path d="M49 77Q62 73 79 79L79 82.5Q62 78 50 81.5Z" fill="#452a20"/><path d="M102 81.5Q122 74 139 77L138.5 80Q122 78 103 85Z" fill="#553326"/><path d="M47 95Q60 88 76 97Q60 101 47 95Z" fill="#2a1712"/><path d="M104 97Q118 88 133 95Q120 101 104 97Z" fill="#2a1712"/><ellipse cx="63" cy="95.6" rx="4.6" ry="3.2" fill="#6a7e8a"/><ellipse cx="117.5" cy="95.6" rx="4.6" ry="3.2" fill="#6a7e8a"/><circle cx="63.5" cy="95.3" r="1.6" fill="#2a1a14"/><circle cx="117.5" cy="95.3" r="1.6" fill="#2a1a14"/><path d="M88 92L80 122L88 126Z" fill="#7a4a38" fill-opacity="0.5"/><path d="M93 90L95 120" stroke="#f2d6c6" stroke-opacity="0.6" stroke-width="3" fill="none"/><path d="M76 126Q84 134 100 130Q104 128 104 124Q96 128 90 126Q84 128 78 122Z" fill="#6a3c2e" fill-opacity="0.8"/><ellipse cx="93" cy="122" rx="3.5" ry="2.5" fill="#f6dccd" fill-opacity="0.6"/><path d="M69.5 151Q84 143 90 145.5Q97 143 110 150Q97 160 88 159.5Q78 159 69.5 151Z" fill="#c98478"/><path d="M69.5 151Q84 143 90 145.5Q97 143 110 150Q90 152 69.5 151Z" fill="#a8665c"/><path d="M69.5 151Q88 152.5 110 150" stroke="#5e2e28" stroke-width="1.1" fill="none"/></g><path d="M50.83 122.23h0.9v0.9h-0.9zM63.15 114.24h0.9v0.9h-0.9zM62.24 105.05h0.9v0.9h-0.9zM48.24 106.54h0.9v0.9h-0.9zM72.46 107.47h0.9v0.9h-0.9zM66.08 130.54h0.9v0.9h-0.9zM117.49 131.34h0.9v0.9h-0.9zM73.47 112.11h0.9v0.9h-0.9zM49.77 112.64h0.9v0.9h-0.9zM110.14 120.28h0.9v0.9h-0.9zM116.66 119.34h0.9v0.9h-0.9zM47.91 109.77h0.9v0.9h-0.9zM118.54 112.8h0.9v0.9h-0.9zM119.41 112.39h0.9v0.9h-0.9zM127.77 110.83h0.9v0.9h-0.9zM121.86 128.5h0.9v0.9h-0.9zM113.79 131.44h0.9v0.9h-0.9zM59.38 125.2h0.9v0.9h-0.9zM61.65 105.1h0.9v0.9h-0.9zM130 120.04h0.9v0.9h-0.9zM114.67 123.47h0.9v0.9h-0.9zM123.72 116.77h0.9v0.9h-0.9zM136.12 117.27h0.9v0.9h-0.9zM106.06 123.64h0.9v0.9h-0.9zM137.77 127.01h0.9v0.9h-0.9zM58.35 122.72h0.9v0.9h-0.9zM60.77 108.71h0.9v0.9h-0.9zM47.89 125.51h0.9v0.9h-0.9zM53.92 114.95h0.9v0.9h-0.9zM106.74 116.58h0.9v0.9h-0.9zM134.04 126.94h0.9v0.9h-0.9zM113.47 115.63h0.9v0.9h-0.9zM74.29 130.82h0.9v0.9h-0.9zM51.64 110.49h0.9v0.9h-0.9zM61.52 120.5h0.9v0.9h-0.9zM46.13 115.73h0.9v0.9h-0.9zM64.12 130.69h0.9v0.9h-0.9zM121.53 121.29h0.9v0.9h-0.9zM105.84 129.19h0.9v0.9h-0.9zM133.73 126.34h0.9v0.9h-0.9zM58.77 106.9h0.9v0.9h-0.9zM106.12 105.89h0.9v0.9h-0.9zM51.19 113.52h0.9v0.9h-0.9zM46.01 108.24h0.9v0.9h-0.9zM57.64 104.71h0.9v0.9h-0.9zM124.88 108.16h0.9v0.9h-0.9zM57.12 114.2h0.9v0.9h-0.9zM73.17 131.81h0.9v0.9h-0.9zM61.48 106.4h0.9v0.9h-0.9zM56.96 111.41h0.9v0.9h-0.9zM109.49 104.65h0.9v0.9h-0.9zM121.96 108.1h0.9v0.9h-0.9zM104.92 118.79h0.9v0.9h-0.9zM133.35 123.49h0.9v0.9h-0.9zM57.73 108.68h0.9v0.9h-0.9zM122.11 125.81h0.9v0.9h-0.9zM53.14 126.72h0.9v0.9h-0.9zM132.99 126.57h0.9v0.9h-0.9zM129.16 110.35h0.9v0.9h-0.9zM116.09 104.81h0.9v0.9h-0.9zM54.94 111.26h0.9v0.9h-0.9zM136.52 116.52h0.9v0.9h-0.9zM137.59 130.74h0.9v0.9h-0.9zM53.05 110.35h0.9v0.9h-0.9zM52.54 121.47h0.9v0.9h-0.9zM132.57 117.43h0.9v0.9h-0.9zM131.19 106.37h0.9v0.9h-0.9zM134.93 125.9h0.9v0.9h-0.9zM120.25 109h0.9v0.9h-0.9zM115.31 126.42h0.9v0.9h-0.9zM117.46 115.24h0.9v0.9h-0.9zM128.64 108.76h0.9v0.9h-0.9zM50.84 129.34h0.9v0.9h-0.9zM108.97 127.14h0.9v0.9h-0.9zM126.35 113.81h0.9v0.9h-0.9zM108.45 104.4h0.9v0.9h-0.9zM126.09 118.74h0.9v0.9h-0.9zM118.75 128.41h0.9v0.9h-0.9zM111.18 111.05h0.9v0.9h-0.9zM53.7 120.42h0.9v0.9h-0.9zM59.41 107.67h0.9v0.9h-0.9zM116.03 116.83h0.9v0.9h-0.9zM134.75 115.78h0.9v0.9h-0.9zM121.06 118.89h0.9v0.9h-0.9zM104.64 116.32h0.9v0.9h-0.9zM46.13 126.38h0.9v0.9h-0.9zM61.15 124.31h0.9v0.9h-0.9zM115.08 118.51h0.9v0.9h-0.9zM130.67 106.97h0.9v0.9h-0.9zM112.45 111.75h0.9v0.9h-0.9z" fill="#a0583c" fill-opacity="0.7"/></g></svg>
<text x="1111" y="1013.6" font-size="11.2" fill="#AAAAAA" text-anchor="middle">1536 × 2048</text>
<rect x="1150.7" y="269.8" width="116.5" height="21.4" rx="5.6" fill="#0F1F0F"/>
<text x="1208.95" y="284.08" font-size="13.44" fill="#FFFFFF" text-anchor="middle" stroke="#fff" stroke-width="0.45">Rosto para trocar</text>
<path d="M1349.26 290.6H1626.44A8.96 8.96 0 0 1 1635.4 299.56V388.64A8.96 8.96 0 0 1 1626.44 397.6H1349.26A8.96 8.96 0 0 1 1340.3 388.64V299.56A8.96 8.96 0 0 1 1349.26 290.6Z" fill="#345634" filter="url(#shs)"/>
<path d="M1349.26 290.6H1626.44A8.96 8.96 0 0 1 1635.4 299.56V324.2H1340.3V299.56A8.96 8.96 0 0 1 1349.26 290.6Z" fill="#233423"/>
<rect x="1340.3" y="323.6" width="295.1" height="1.9" fill="#000" fill-opacity="0.18"/>
<circle cx="1356.8" cy="307.4" r="5.6" fill="#7a7a7a"/>
<text x="1373.5" y="313" font-size="15.68" fill="#9c9c9c" stroke="#9c9c9c" stroke-width="0.3">ImageInsertWithBBox(FaceParsing)</text>
<circle cx="1351.5" cy="339.88" r="4.48" fill="#77FF77"/>
<text x="1362.5" y="345.08" font-size="13.44" fill="#AAAAAA" stroke="#aaa" stroke-width="0.3">bbox</text>
<circle cx="1351.5" cy="362.28" r="4.48" fill="#64B5F6"/>
<text x="1362.5" y="367.48" font-size="13.44" fill="#AAAAAA" stroke="#aaa" stroke-width="0.3">image_src</text>
<circle cx="1351.5" cy="384.68" r="4.48" fill="#64B5F6"/>
<text x="1362.5" y="389.88" font-size="13.44" fill="#AAAAAA" stroke="#aaa" stroke-width="0.3">image</text>
<circle cx="1625.32" cy="339.88" r="4.48" fill="#64B5F6" stroke="#000" stroke-width="1.3"/>
<text x="1614" y="345.08" font-size="13.44" fill="#AAAAAA" text-anchor="end" stroke="#aaa" stroke-width="0.3">IMAGE</text>
<rect x="1488.2" y="266.2" width="144.2" height="21.7" rx="5.6" fill="#0F1F0F"/>
<text x="1560.3" y="280.78" font-size="13.44" fill="#FFFFFF" text-anchor="middle" stroke="#fff" stroke-width="0.45">comfyui_face_parsing</text>
<path d="M1383.26 423.6H1449.34A8.96 8.96 0 0 1 1458.3 432.56V443.76A8.96 8.96 0 0 1 1449.34 452.72H1383.26A8.96 8.96 0 0 1 1374.3 443.76V432.56A8.96 8.96 0 0 1 1383.26 423.6Z" fill="#ff00ff" fill-opacity="0.2" filter="url(#shbs)"/>
<circle cx="1385.5" cy="439.28" r="4.48" fill="#77FF77" opacity="0.2"/>
<circle cx="1448.22" cy="439.28" r="4.48" fill="#64B5F6" stroke="#000" stroke-width="1.3" opacity="0.2"/>
<path d="M1346.36 475.6H1631.04A8.96 8.96 0 0 1 1640 484.56V802.54A8.96 8.96 0 0 1 1631.04 811.5H1346.36A8.96 8.96 0 0 1 1337.4 802.54V484.56A8.96 8.96 0 0 1 1346.36 475.6Z" fill="#ff00ff" fill-opacity="0.2" filter="url(#shb)"/>
<path d="M1346.36 475.6H1631.04A8.96 8.96 0 0 1 1640 484.56V509.2H1337.4V484.56A8.96 8.96 0 0 1 1346.36 475.6Z" fill="#333" fill-opacity="0.2"/>
<circle cx="1353.9" cy="492.4" r="5.6" fill="#707070" opacity="0.2"/>
<text x="1370.6" y="498" font-size="15.68" fill="#9c9c9c" opacity="0.2" stroke="#9c9c9c" stroke-width="0.3">Save Image</text>
<circle cx="1348.6" cy="524.88" r="4.48" fill="#64B5F6" opacity="0.2"/>
<text x="1359.6" y="530.08" font-size="13.44" fill="#AAAAAA" opacity="0.2" stroke="#aaa" stroke-width="0.3">images</text>
<rect x="1354.3" y="539" width="268.6" height="22.4" rx="11.2" fill="#222" stroke="#666" stroke-width="1.1" opacity="0.2"/>
<text x="1371.1" y="554.48" font-size="13.44" fill="#999999" opacity="0.2" stroke="#999" stroke-width="0.3">filename_prefix</text>
<text x="1606.1" y="554.48" font-size="13.44" fill="#DDDDDD" text-anchor="end" opacity="0.2" stroke="#ddd" stroke-width="0.3">OK_UP_</text>
<path d="M1343.86 911.1H1711.14A8.96 8.96 0 0 1 1720.1 920.06V1377.54A8.96 8.96 0 0 1 1711.14 1386.5H1343.86A8.96 8.96 0 0 1 1334.9 1377.54V920.06A8.96 8.96 0 0 1 1343.86 911.1Z" fill="#363636" filter="url(#sh)"/>
<path d="M1343.86 911.1H1711.14A8.96 8.96 0 0 1 1720.1 920.06V944.7H1334.9V920.06A8.96 8.96 0 0 1 1343.86 911.1Z" fill="#343434"/>
<rect x="1334.9" y="944.1" width="385.2" height="1.9" fill="#000" fill-opacity="0.18"/>
<circle cx="1351.4" cy="927.9" r="5.6" fill="#707070"/>
<text x="1368.1" y="933.5" font-size="15.68" fill="#9c9c9c" stroke="#9c9c9c" stroke-width="0.3">Preview Image</text>
<circle cx="1346.1" cy="960.38" r="4.48" fill="#64B5F6"/>
<text x="1357.1" y="965.58" font-size="13.44" fill="#AAAAAA" stroke="#aaa" stroke-width="0.3">images</text>
<path d="M1795.56 284.3H2684.94A8.96 8.96 0 0 1 2693.9 293.26V373.84A8.96 8.96 0 0 1 2684.94 382.8H1795.56A8.96 8.96 0 0 1 1786.6 373.84V293.26A8.96 8.96 0 0 1 1795.56 284.3Z" fill="#363636" filter="url(#shs)"/>
<path d="M1795.56 284.3H2684.94A8.96 8.96 0 0 1 2693.9 293.26V317.9H1786.6V293.26A8.96 8.96 0 0 1 1795.56 284.3Z" fill="#343434"/>
<rect x="1786.6" y="317.3" width="907.3" height="1.9" fill="#000" fill-opacity="0.18"/>
<path d="M1798.6 296.5h2.2v2.2h-2.2zM1798.6 300h2.2v2.2h-2.2zM1798.6 303.5h2.2v2.2h-2.2zM1802.1 296.5h2.2v2.2h-2.2zM1802.1 300h2.2v2.2h-2.2zM1802.1 303.5h2.2v2.2h-2.2zM1805.6 296.5h2.2v2.2h-2.2zM1805.6 300h2.2v2.2h-2.2zM1805.6 303.5h2.2v2.2h-2.2z" fill="#787878"/>
<text x="1819.8" y="306.7" font-size="15.68" fill="#9c9c9c" stroke="#9c9c9c" stroke-width="0.3">Model upscaler</text>
<circle cx="1797.8" cy="333.58" r="4.48" fill="#64B5F6"/>
<text x="1808.8" y="338.78" font-size="13.44" fill="#AAAAAA" stroke="#aaa" stroke-width="0.3">image</text>
<circle cx="2683.82" cy="333.58" r="4.48" fill="#64B5F6" stroke="#000" stroke-width="1.3"/>
<text x="2672.5" y="338.78" font-size="13.44" fill="#AAAAAA" text-anchor="end" stroke="#aaa" stroke-width="0.3">IMAGE</text>
<rect x="1802.8" y="347.2" width="874.4" height="22.4" rx="11.2" fill="#222" stroke="#666" stroke-width="1.1"/>
<path d="M1820.72 352.8L1809.52 358.4L1820.72 364Z" fill="#DDDDDD"/>
<path d="M2659.28 352.8L2670.48 358.4L2659.28 364Z" fill="#DDDDDD"/>
<text x="1825.2" y="362.68" font-size="13.44" fill="#999999" stroke="#999" stroke-width="0.3">model_name</text>
<text x="2638" y="362.68" font-size="13.44" fill="#DDDDDD" text-anchor="end" stroke="#ddd" stroke-width="0.3">RealESRGAN_x2.pth</text>
<rect x="2587.4" y="259.9" width="104.2" height="21.9" rx="5.6" fill="#0F1F0F"/>
<text x="2639.5" y="274.68" font-size="13.44" fill="#FFFFFF" text-anchor="middle" stroke="#fff" stroke-width="0.45">Model upscaler</text>
<path d="M1791.36 398.5H2681.14A8.96 8.96 0 0 1 2690.1 407.46V1302.84A8.96 8.96 0 0 1 2681.14 1311.8H1791.36A8.96 8.96 0 0 1 1782.4 1302.84V407.46A8.96 8.96 0 0 1 1791.36 398.5Z" fill="#363636" filter="url(#sh)"/>
<path d="M1791.36 398.5H2681.14A8.96 8.96 0 0 1 2690.1 407.46V432.1H1782.4V407.46A8.96 8.96 0 0 1 1791.36 398.5Z" fill="#343434"/>
<rect x="1782.4" y="431.5" width="907.7" height="1.9" fill="#000" fill-opacity="0.18"/>
<circle cx="1798.9" cy="415.3" r="5.6" fill="#707070"/>
<text x="1815.6" y="420.9" font-size="15.68" fill="#9c9c9c" stroke="#9c9c9c" stroke-width="0.3">Save Image</text>
<circle cx="1793.6" cy="447.78" r="4.48" fill="#64B5F6"/>
<text x="1804.6" y="452.98" font-size="13.44" fill="#AAAAAA" stroke="#aaa" stroke-width="0.3">images</text>
<rect x="1799.4" y="461.4" width="874" height="22.4" rx="11.2" fill="#222" stroke="#666" stroke-width="1.1"/>
<text x="1816.2" y="476.88" font-size="13.44" fill="#999999" stroke="#999" stroke-width="0.3">filename_prefix</text>
<text x="2656.6" y="476.88" font-size="13.44" fill="#DDDDDD" text-anchor="end" stroke="#ddd" stroke-width="0.3">OK_UP_</text>
<circle cx="1793" cy="472.5" r="3.3" fill="none" stroke="#15150c" stroke-width="1.5"/>
<path d="M2834.06 615.4H3160.64A8.96 8.96 0 0 1 3169.6 624.36V669.24A8.96 8.96 0 0 1 3160.64 678.2H2834.06A8.96 8.96 0 0 1 2825.1 669.24V624.36A8.96 8.96 0 0 1 2834.06 615.4Z" fill="#363636" filter="url(#shs)"/>
<path d="M2834.06 615.4H3160.64A8.96 8.96 0 0 1 3169.6 624.36V649H2825.1V624.36A8.96 8.96 0 0 1 2834.06 615.4Z" fill="#343434"/>
<rect x="2825.1" y="648.4" width="344.5" height="1.9" fill="#000" fill-opacity="0.18"/>
<circle cx="2841.6" cy="632.2" r="5.6" fill="#707070"/>
<text x="2858.3" y="637.8" font-size="15.68" fill="#9c9c9c" stroke="#9c9c9c" stroke-width="0.3">Preview Image</text>
<circle cx="2836.3" cy="664.68" r="4.48" fill="#64B5F6"/>
<text x="2847.3" y="669.88" font-size="13.44" fill="#AAAAAA" stroke="#aaa" stroke-width="0.3">images</text>
<text x="17" y="819.8" font-size="11" fill="#999999">T: 0.00s</text>
<text x="17" y="834.25" font-size="11" fill="#999999">I: 0</text>
<text x="17" y="848.7" font-size="11" fill="#999999">N: 14 [14]</text>
<text x="17" y="863.15" font-size="11" fill="#999999">V: 32</text>
<text x="17" y="877.6" font-size="11" fill="#999999">FPS:59.88</text>
</g>
</svg>
</body></html>
